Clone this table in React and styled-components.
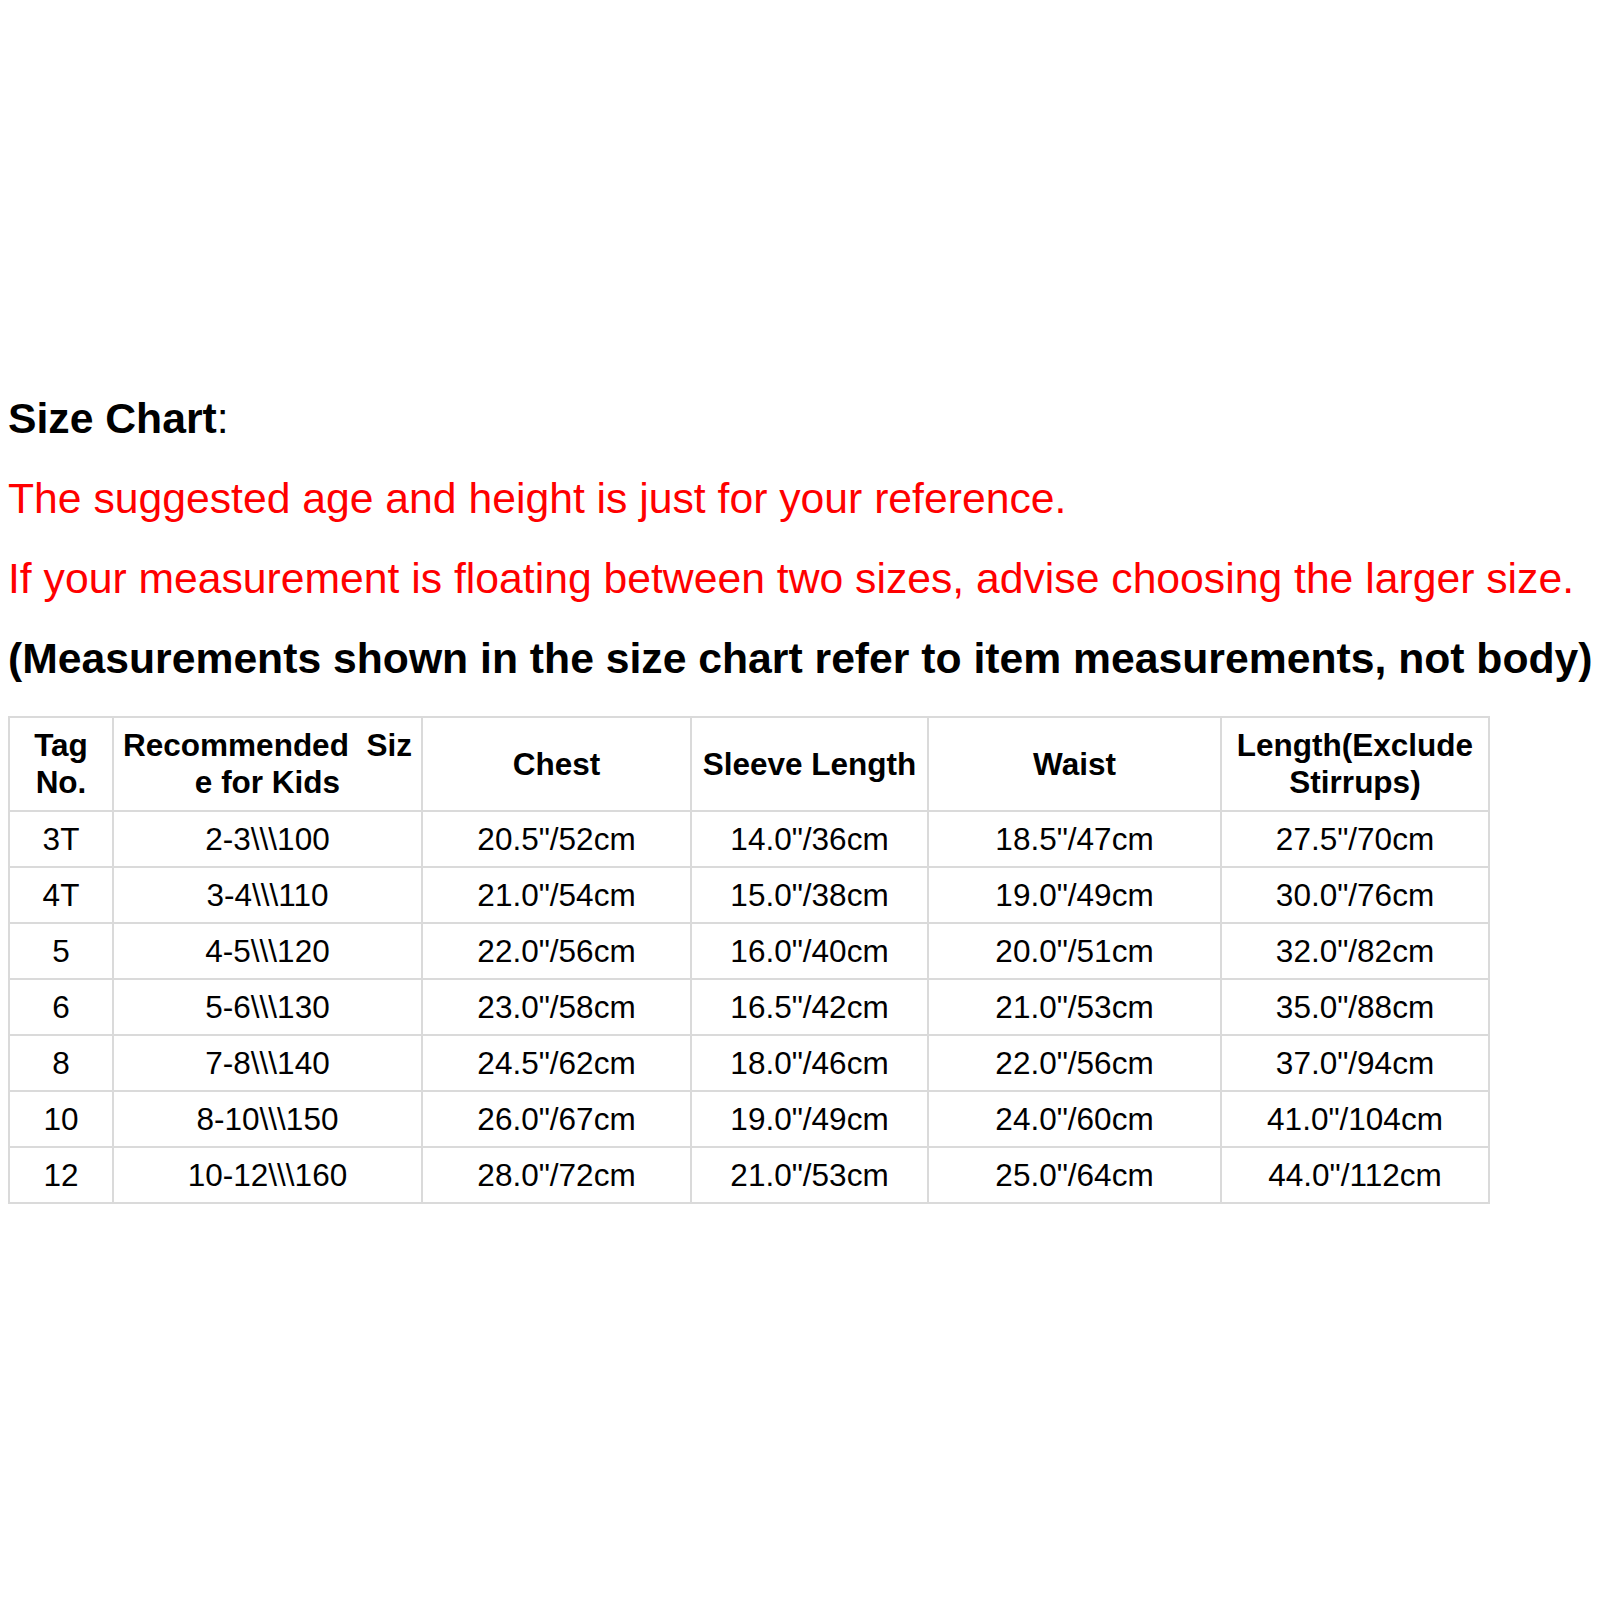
import React from 'react';
import styled, { createGlobalStyle } from 'styled-components';

const GlobalStyle = createGlobalStyle`
  html, body {
    margin: 0;
    padding: 0;
    background: #fff;
  }
  body {
    font-family: "Liberation Sans", Arial, sans-serif;
    color: #000;
  }
`;

const Page = styled.div`
  width: 1600px;
  height: 1600px;
  padding: 378px 0 0 8px;
  box-sizing: border-box;
  overflow: hidden;
`;

const Line = styled.p`
  margin: 0;
  font-size: 42.7px;
  line-height: 80px;
  white-space: nowrap;
  color: ${p => (p.$red ? '#ff0000' : '#000')};
  font-weight: ${p => (p.$bold ? 700 : 400)};
`;

const Strong = styled.strong`
  font-weight: 700;
`;

const Table = styled.table`
  margin-top: 18px;
  border-collapse: collapse;
  table-layout: fixed;
  width: 1482px;
  text-align: center;
  font-size: 31.5px;
`;

const HeadCell = styled.th`
  width: ${p => p.$w}px;
  height: 92px;
  padding: 0;
  border: 2px solid #dadada;
  font-weight: 700;
  line-height: 37px;
  vertical-align: middle;
`;

const Cell = styled.td`
  height: 54px;
  padding: 0;
  border: 2px solid #dadada;
  line-height: 54px;
  white-space: nowrap;
`;

const columns = [
  { w: 102, label: <>Tag<br />No.</> },
  { w: 307, label: <>Recommended&nbsp; Siz<br />e for Kids</> },
  { w: 267, label: 'Chest' },
  { w: 235, label: 'Sleeve Length' },
  { w: 291, label: 'Waist' },
  { w: 266, label: <>Length(Exclude<br />Stirrups)</> },
];

const rows = [
  ['3T', '2-3\\\\\\100', '20.5"/52cm', '14.0"/36cm', '18.5"/47cm', '27.5"/70cm'],
  ['4T', '3-4\\\\\\110', '21.0"/54cm', '15.0"/38cm', '19.0"/49cm', '30.0"/76cm'],
  ['5', '4-5\\\\\\120', '22.0"/56cm', '16.0"/40cm', '20.0"/51cm', '32.0"/82cm'],
  ['6', '5-6\\\\\\130', '23.0"/58cm', '16.5"/42cm', '21.0"/53cm', '35.0"/88cm'],
  ['8', '7-8\\\\\\140', '24.5"/62cm', '18.0"/46cm', '22.0"/56cm', '37.0"/94cm'],
  ['10', '8-10\\\\\\150', '26.0"/67cm', '19.0"/49cm', '24.0"/60cm', '41.0"/104cm'],
  ['12', '10-12\\\\\\160', '28.0"/72cm', '21.0"/53cm', '25.0"/64cm', '44.0"/112cm'],
];

export default function App() {
  return (
    <Page>
      <GlobalStyle />
      <Line><Strong>Size Chart</Strong>:</Line>
      <Line $red>The suggested age and height is just for your reference.</Line>
      <Line $red>If your measurement is floating between two sizes, advise choosing the larger size.</Line>
      <Line $bold>(Measurements shown in the size chart refer to item measurements, not body)</Line>
      <Table>
        <thead>
          <tr>
            {columns.map((c, i) => (
              <HeadCell key={i} $w={c.w}>{c.label}</HeadCell>
            ))}
          </tr>
        </thead>
        <tbody>
          {rows.map((r, i) => (
            <tr key={i}>
              {r.map((v, j) => <Cell key={j}>{v}</Cell>)}
            </tr>
          ))}
        </tbody>
      </Table>
    </Page>
  );
}
